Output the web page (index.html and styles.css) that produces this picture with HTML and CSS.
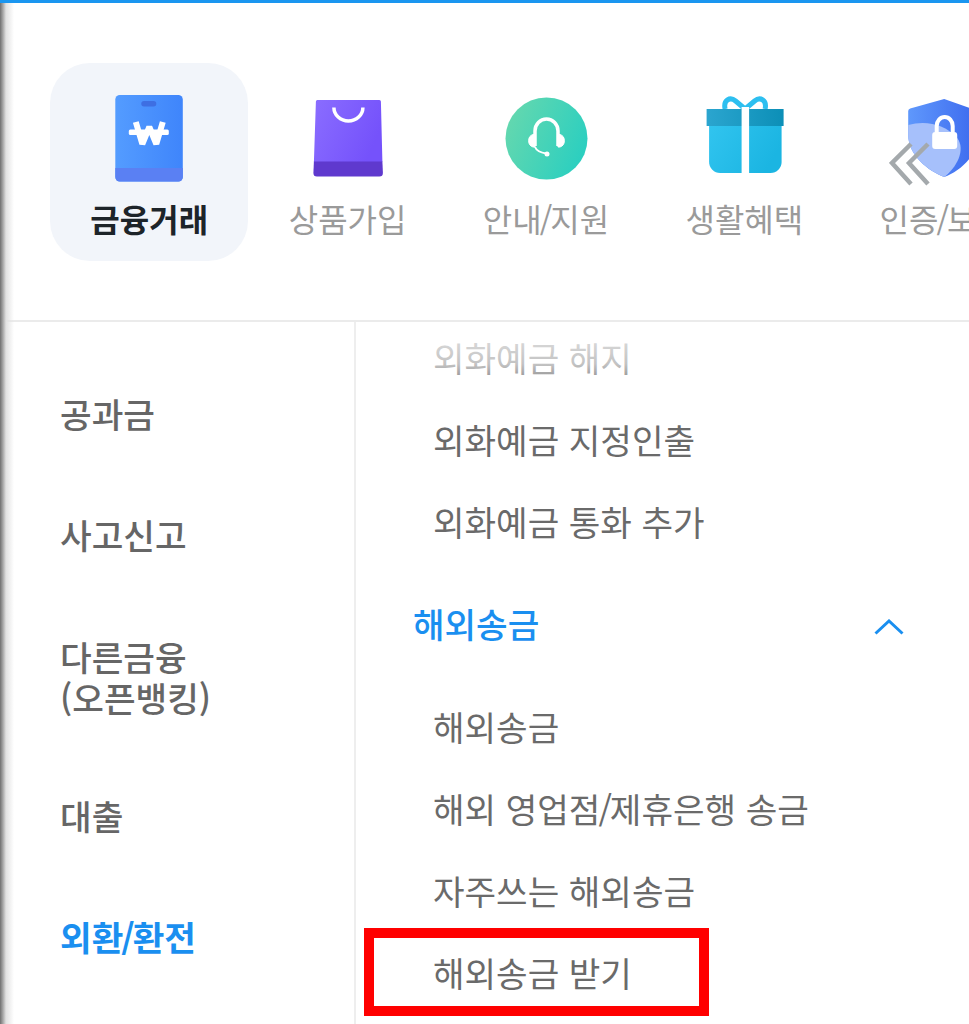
FILE: index.html
```html
<!DOCTYPE html>
<html lang="ko">
<head>
<meta charset="utf-8">
<title>금융거래 메뉴</title>
<link rel="stylesheet" href="styles.css">
</head>
<body>
<div class="page">
  <div class="edge-shadow"></div>
  <header class="tabs-wrap">
    <nav class="tabs">
      <a class="tab tab-active">
        <svg class="tab-icon" viewBox="99.2 88 100 100">
          <defs>
            <linearGradient id="g1" x1="0" y1="0" x2="1" y2="0"><stop offset="0" stop-color="#549cff"/><stop offset="1" stop-color="#3f85fb"/></linearGradient>
          </defs>
          <rect x="115.5" y="95" width="67.5" height="86.5" rx="4.5" fill="url(#g1)"/>
          <path d="M115.5 168H183V177A4.500 4.500 0 0 1 178.500 181.500H120A4.500 4.500 0 0 1 115.500 177Z" fill="#5a80f3"/>
          <rect x="141.500" y="101" width="15" height="5.500" rx="2.700" fill="#3e6fe2"/>
          <path d="M136 122L142.500 144L149.500 127L156.500 144L163 122" fill="none" stroke="#fff" stroke-width="6" stroke-linejoin="bevel"/>
          <rect x="129" y="129.500" width="40" height="5.500" rx="1.500" fill="#fff"/>
        </svg>
        <span class="tab-label">금융거래</span>
      </a>
      <a class="tab">
        <svg class="tab-icon" viewBox="297.600 88 100 100">
          <defs>
            <linearGradient id="g2" x1="0" y1="0" x2="1" y2="0.400"><stop offset="0" stop-color="#8a6dff"/><stop offset="1" stop-color="#7552fb"/></linearGradient>
          </defs>
          <path d="M317 100H379Q380.500 100 380.500 101.500L382 162H313.500L315.500 101.500Q315.500 100 317 100Z" fill="url(#g2)"/>
          <path d="M313.500 161.500H382L382.500 173Q382.500 176.500 379 176.500H316.500Q313 176.500 313 173Z" fill="#5f39ce"/>
          <path d="M333.500 107.500A14.500 13.500 0 0 0 362.500 107.500" fill="none" stroke="#fff" stroke-width="3.500"/>
        </svg>
        <span class="tab-label">상품가입</span>
      </a>
      <a class="tab">
        <svg class="tab-icon" viewBox="496 88 100 100">
          <defs>
            <linearGradient id="g3" x1="0" y1="0.200" x2="1" y2="0.600"><stop offset="0" stop-color="#66d8ae"/><stop offset="1" stop-color="#2bcfc0"/></linearGradient>
          </defs>
          <circle cx="546.500" cy="138.500" r="41" fill="url(#g3)"/>
          <path d="M535 146V131A11.500 12 0 0 1 558 131V146" fill="none" stroke="#fff" stroke-width="3.500"/>
          <path d="M535 134.500H533A6 6.500 0 0 0 533 147H535Z" fill="#fff" stroke="#fff" stroke-width="1"/>
          <path d="M558 134.500H560A6 6.500 0 0 1 560 147H558Z" fill="#fff" stroke="#fff" stroke-width="1"/>
          <path d="M535 147Q537 152 546 153.500" fill="none" stroke="#fff" stroke-width="2"/>
          <circle cx="547" cy="154" r="2.500" fill="#fff"/>
        </svg>
        <span class="tab-label">안내<span class="slash">/</span>지원</span>
      </a>
      <a class="tab">
        <svg class="tab-icon" viewBox="694.400 88 100 100">
          <defs>
            <linearGradient id="g4" x1="0" y1="0" x2="1" y2="0.400"><stop offset="0" stop-color="#31c4ef"/><stop offset="1" stop-color="#1bb5e2"/></linearGradient>
            <linearGradient id="g5" x1="0" y1="0" x2="1" y2="0"><stop offset="0" stop-color="#2ba5cf"/><stop offset="1" stop-color="#0c8fb7"/></linearGradient>
          </defs>
          <path d="M745.500 109L736 101C730.500 96.500 723.500 100 725.500 109M745.500 109L755 101C760.500 96.500 767.500 100 765.500 109" fill="none" stroke="#2dbff0" stroke-width="5"/>
          <path d="M709.500 126H782V162A11 11 0 0 1 771 173H720.500A11 11 0 0 1 709.500 162Z" fill="url(#g4)"/>
          <rect x="707" y="109" width="77" height="17" fill="url(#g5)"/>
          <rect x="742" y="107" width="7.500" height="67" fill="#fff"/>
        </svg>
        <span class="tab-label">생활혜택</span>
      </a>
      <a class="tab">
        <svg class="tab-icon" viewBox="892.800 88 100 100">
          <defs>
            <linearGradient id="g6" x1="0" y1="0" x2="1" y2="0"><stop offset="0" stop-color="#5f98fc"/><stop offset="1" stop-color="#3c69ee"/></linearGradient>
          </defs>
          <path d="M944 99L978 111V135C978 155 960 171 944 177C928 171 908 155 908 135V111Q908 109 910 108.500Z" fill="url(#g6)"/>
          <path d="M908 125C925 120 945 124 957 138C966 150 956 168 944 177C928 171 908 155 908 135Z" fill="#a6c0fb"/>
          <path d="M936.500 132V126A8 9 0 0 1 952.500 126V132" fill="none" stroke="#fff" stroke-width="4"/>
          <rect x="932" y="132" width="25" height="17" rx="3" fill="#fff"/>
        </svg>
        <span class="tab-label">인증<span class="slash">/</span>보안</span>
      </a>
    </nav>
    <svg class="scroll-hint" viewBox="0 0 48 46">
      <path d="M22 2L3 21L22 42M39 2L20 21L39 42" fill="none" stroke="#a4a9ac" stroke-width="4.500"/>
    </svg>
  </header>
  <main class="menu">
    <ul class="side">
      <li class="side-item">공과금</li>
      <li class="side-item">사고신고</li>
      <li class="side-item side-item-tall">다른금융<br>(오픈뱅킹)</li>
      <li class="side-item">대출</li>
      <li class="side-item side-item-active"><span>외환<span class="slash">/</span>환전</span></li>
    </ul>
    <div class="detail">
      <div class="detail-fade"></div>
      <ul class="detail-list">
        <li class="sub-item">외화예금 해지</li>
        <li class="sub-item">외화예금 지정인출</li>
        <li class="sub-item">외화예금 통화 추가</li>
        <li class="group-head">
          <span>해외송금</span>
          <svg class="chevron" viewBox="0 0 30 16"><path d="M1.500 14.500L15 2L28.500 14.500" fill="none" stroke="#1a8ff0" stroke-width="3"/></svg>
        </li>
        <li class="sub-item">해외송금</li>
        <li class="sub-item"><span>해외 영업점<span class="slash">/</span>제휴은행 송금</span></li>
        <li class="sub-item">자주쓰는 해외송금</li>
        <li class="sub-item sub-item-marked">해외송금 받기<span class="red-box"></span></li>
      </ul>
    </div>
  </main>
</div>
</body>
</html>
```

FILE: styles.css
```css
* { box-sizing: border-box; }
html, body { margin: 0; padding: 0; background: #fff; }
body { font-family: "Noto Sans CJK KR", "Noto Sans", sans-serif; }
ul { list-style: none; margin: 0; padding: 0; }

.page {
  position: relative;
  width: 969px;
  height: 1024px;
  overflow: hidden;
  border-top: 3px solid #1a96f0;
  display: flex;
  flex-direction: column;
}
.edge-shadow {
  position: absolute;
  left: 0; top: 0; bottom: 0;
  width: 14px;
  background: linear-gradient(to right, #707070 0, #a8a8a8 3px, #e2e2e2 6px, rgba(255,255,255,0) 14px);
  z-index: 3;
}
.slash { margin: 0 -2px; }

.tabs-wrap {
  position: relative;
  height: 319px;
  flex: none;
  border-bottom: 2px solid #ebebeb;
  padding: 60px 0 0 50px;
  overflow: hidden;
}
.tabs { display: flex; width: 1100px; }
.tab {
  width: 198.4px;
  height: 198px;
  flex: none;
  border-radius: 40px;
  display: flex;
  flex-direction: column;
  align-items: center;
  padding-top: 25px;
}
.tab-active { background: #f2f5fa; }
.tab-icon { width: 100px; height: 100px; display: block; flex: none; }
.tab-label {
  font-size: 32px;
  line-height: 46px;
  margin-top: 7px;
  color: #9a9a9a;
  white-space: nowrap;
}
.tab-active .tab-label { color: #1d2429; font-weight: 700; }
.scroll-hint {
  position: absolute;
  left: 889px; top: 139px;
  width: 48px; height: 46px;
}

.menu { flex: 1; display: flex; min-height: 0; }
.side {
  width: 354px;
  flex: none;
  padding-top: 32px;
}
.side-item {
  height: 121px;
  padding-left: 60px;
  display: flex;
  align-items: center;
  font-size: 34.4px;
  line-height: 41px;
  font-weight: 500;
  color: #666;
  padding-bottom: 3px;
}
.side-item-tall { height: 160px; display: block; padding-top: 40px; }
.side-item-active { color: #1a8ff0; font-weight: 700; }

.detail {
  position: relative;
  flex: 1;
  border-left: 2px solid #eeeeee;
  min-width: 0;
}
.detail-fade {
  position: absolute;
  left: 0; right: 0; top: 0;
  height: 70px;
  background: linear-gradient(to bottom, rgba(255,255,255,0.85) 0, rgba(255,255,255,0.6) 60%, rgba(255,255,255,0) 100%);
  z-index: 1;
}
.detail-list { margin-top: -5px; }
.sub-item {
  position: relative;
  height: 82px;
  padding: 0 0 2px 77px;
  display: flex;
  align-items: center;
  font-size: 34.3px;
  color: #6a6a6a;
  white-space: nowrap;
}
.group-head {
  height: 123px;
  padding: 0 63px 3px 57px;
  display: flex;
  align-items: center;
  justify-content: space-between;
  font-size: 34.3px;
  font-weight: 500;
  color: #1a8ff0;
}
.chevron { width: 30px; height: 16px; display: block; margin: 8px 2px 0 0; }
.red-box {
  position: absolute;
  left: 8px; top: -4px;
  width: 345px; height: 88px;
  border: 10px solid #ff0000;
}
```
